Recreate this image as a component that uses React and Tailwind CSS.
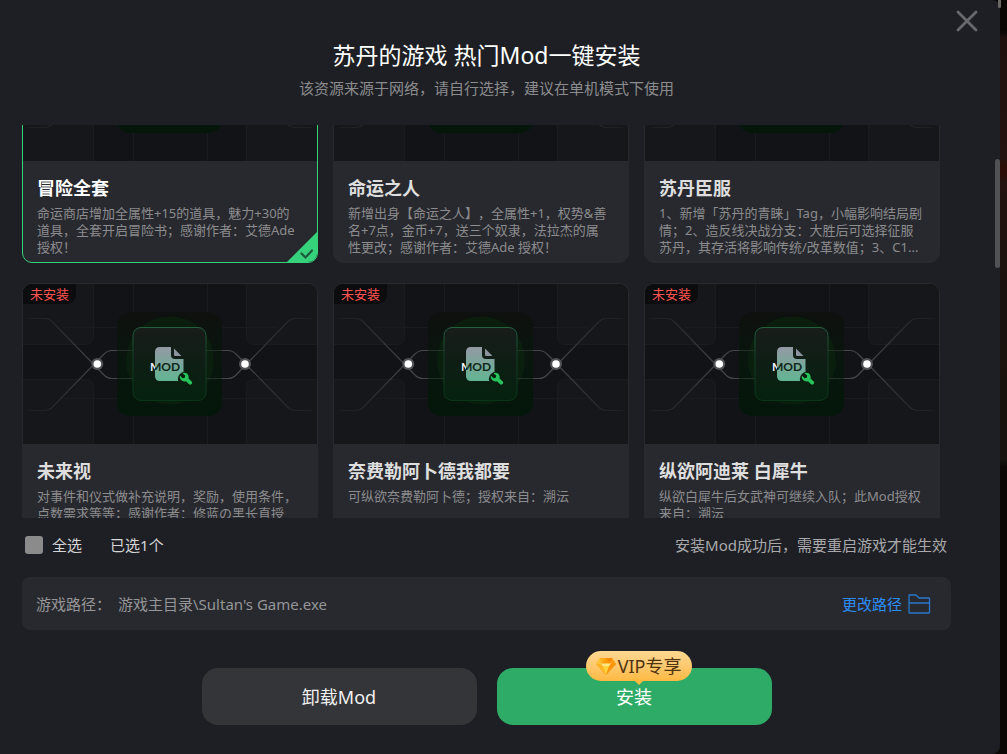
import { useEffect, useRef, useState } from "react";

const MODS = [
  {
    id: 1,
    title: "冒险全套",
    desc: "命运商店增加全属性+15的道具，魅力+30的道具，全套开启冒险书；感谢作者：艾德Ade 授权！",
    installed: true,
  },
  {
    id: 2,
    title: "命运之人",
    desc: "新增出身【命运之人】，全属性+1，权势&善名+7点，金币+7，送三个奴隶，法拉杰的属性更改；感谢作者：艾德Ade 授权！",
    installed: true,
  },
  {
    id: 3,
    title: "苏丹臣服",
    desc: "1、新增「苏丹的青睐」Tag，小幅影响结局剧情；2、造反线决战分支：大胜后可选择征服苏丹，其存活将影响传统/改革数值；3、C1...",
    installed: true,
  },
  {
    id: 4,
    title: "未来视",
    desc: "对事件和仪式做补充说明，奖励，使用条件，点数需求等等；感谢作者：修蓝の黑长直授权！",
    installed: false,
  },
  {
    id: 5,
    title: "奈费勒阿卜德我都要",
    desc: "可纵欲奈费勒阿卜德；授权来自：溯沄",
    installed: false,
  },
  {
    id: 6,
    title: "纵欲阿迪莱 白犀牛",
    desc: "纵欲白犀牛后女武神可继续入队；此Mod授权来自：溯沄",
    installed: false,
  },
];

const ModCover = () => (
  <svg viewBox="0 0 294 160" preserveAspectRatio="xMidYMid slice" className="block w-full h-40 bg-[#121317]" aria-hidden="true">
    <defs>
      <linearGradient id="outer" x1="0" y1="0" x2="0" y2="1">
        <stop offset="0" stopColor="#0e110f" />
        <stop offset="0.5" stopColor="#08160d" />
        <stop offset="1" stopColor="#04160a" />
      </linearGradient>
      <linearGradient id="tile" x1="0" y1="0" x2="0" y2="1">
        <stop offset="0" stopColor="#181d1a" />
        <stop offset="0.5" stopColor="#0e1e14" />
        <stop offset="1" stopColor="#05220e" />
      </linearGradient>
      <linearGradient id="edge" x1="0" y1="0" x2="0" y2="1">
        <stop offset="0" stopColor="#22603f" />
        <stop offset="0.4" stopColor="#173c28" />
        <stop offset="1" stopColor="#0a3617" />
      </linearGradient>
      <linearGradient id="doc" x1="0" y1="0" x2="0" y2="1">
        <stop offset="0" stopColor="#9499a4" />
        <stop offset="1" stopColor="#62b592" />
      </linearGradient>
      <linearGradient id="word" gradientUnits="userSpaceOnUse" x1="127" y1="0" x2="137" y2="0">
        <stop offset="0.5" stopColor="#eef0ff" />
        <stop offset="0.5" stopColor="#11251b" />
      </linearGradient>
      <linearGradient id="fadeL" gradientUnits="userSpaceOnUse" x1="4" y1="0" x2="74" y2="0">
        <stop offset="0" stopColor="#2a2b2e" stopOpacity="0.3" />
        <stop offset="1" stopColor="#454649" />
      </linearGradient>
      <linearGradient id="fadeR" gradientUnits="userSpaceOnUse" x1="290" y1="0" x2="222" y2="0">
        <stop offset="0" stopColor="#2a2b2e" stopOpacity="0.3" />
        <stop offset="1" stopColor="#454649" />
      </linearGradient>
    </defs>

    <g fill="#16171b" stroke="#1b1c20">
      <path d="M-1 -1H70.500V52.500Q70.500 60.500 62.500 60.500H-1Z" />
      <path d="M-1 95.500H62.500Q70.500 95.500 70.500 103.500V161H-1Z" />
      <path d="M295 -1H223.500V52.500Q223.500 60.500 231.500 60.500H295Z" />
      <path d="M295 95.500H231.500Q223.500 95.500 223.500 103.500V161H295Z" />
    </g>
    <g fill="none" stroke="#1a1b1f">
      <path d="M110.500 0V160M184.500 0V160" />
      <path d="M40 43.500H94Q102.500 43.500 102.500 52V106Q102.500 114.500 110 114.500M40 114.500H110" />
      <path d="M254 43.500H200Q191.500 43.500 191.500 52V106Q191.500 114.500 184 114.500M254 114.500H184" />
    </g>

    <rect x="94" y="28" width="105" height="104" rx="13" fill="url(#outer)" />
    <circle cx="147" cy="76.500" r="44" fill="#0b240e" opacity="0.7" />

    <g fill="none" strokeWidth="1.200">
      <path stroke="url(#fadeL)" d="M5 34.500H22Q26 34.500 29 37.500L80 90Q84 94.500 89 94.500H94" />
      <path stroke="url(#fadeL)" d="M5 126.500H22Q26 126.500 29 123.500L80 71Q84 66.500 89 66.500H94" />
      <path stroke="url(#fadeR)" d="M289 34.500H272Q268 34.500 265 37.500L214 90Q210 94.500 205 94.500H199" />
      <path stroke="url(#fadeR)" d="M289 126.500H272Q268 126.500 265 123.500L214 71Q210 66.500 205 66.500H199" />
      <path stroke="#253128" d="M94 66.500H110M94 94.500H110M183 66.500H199M183 94.500H199" />
    </g>

    <rect x="110" y="43.500" width="73" height="73" rx="8" fill="url(#tile)" stroke="url(#edge)" />

    <circle cx="74.300" cy="80" r="6" fill="#515255" />
    <circle cx="74.300" cy="80" r="3.800" fill="#fff" />
    <circle cx="222" cy="80" r="6" fill="#515255" />
    <circle cx="222" cy="80" r="3.800" fill="#fff" />

    <path fill="url(#doc)" d="M137 63H148V71Q148 75 152 75H160.500V97H137Q132 97 132 92V68Q132 63 137 63Z" />
    <path fill="#8b939c" d="M151 64.500L158.500 72H152Q151 72 151 71Z" />
    <text x="127" y="86.500" fill="url(#word)" fontSize="12" className="font-bold font-[family-name:Lato,sans-serif]">
      MOD
    </text>
    <circle cx="162" cy="95" r="7.200" fill="#082010" />
    <path
      fill="#27c45c"
      d="M159.600 89.200C162 88.200 165 89.400 165.600 92.200C165.800 93.200 165.700 93.900 165.500 94.500L168.700 97.600C170.200 99.200 167.700 101.700 166.100 100.200L163 97.200C160.200 98.200 157.200 96.400 156.800 93.600C156.700 92.900 156.800 92.300 157 91.700L159.600 94.200L161.800 93.700L162.200 91.600Z"
    />
  </svg>
);

const ModCard = ({ mod, checked, onToggle }) => (
  <label
    className={`relative flex flex-col h-[263px] rounded-[10px] border overflow-hidden cursor-pointer bg-[#28292e] ${
      checked ? "border-[#36d17b]" : "border-[#28292e]"
    }`}
  >
    <input type="checkbox" className="sr-only" checked={checked} onChange={onToggle} />
    <ModCover />
    {!mod.installed && (
      <span className="absolute left-0 top-0 h-5 px-[7px] rounded-br-[9px] bg-[#0b0c0e] text-[13px] leading-5 text-[#ff5450]">
        未安装
      </span>
    )}
    <div className="pl-[14px] pr-[17px] pt-[15px]">
      <h2 className={`text-lg leading-6 font-bold truncate ${checked ? "text-white" : "text-[#dedede]"}`}>{mod.title}</h2>
      <p className="mt-[5px] text-[13px] leading-[17px] text-[#8c8c8e] [text-spacing-trim:space-all] line-clamp-3">{mod.desc}</p>
    </div>
    {checked && (
      <svg viewBox="0 0 30 30" className="absolute right-0 bottom-0 size-[30px]" aria-hidden="true">
        <path d="M30 0V30H0Z" fill="#36d17b" />
        <path d="M14.500 21.500L18.500 25.500L25 18.500" fill="none" stroke="#1d5a3b" strokeWidth="2.200" strokeLinecap="round" strokeLinejoin="round" />
      </svg>
    )}
  </label>
);

const Diamond = () => (
  <svg viewBox="0 0 20 17" className="w-5 h-[17px] shrink-0" aria-hidden="true">
    <path d="M4 0H16L20 6L10 17L0 6Z" fill="#ffa51a" />
    <path d="M4 0L6 6H0Z" fill="#ffc33c" />
    <path d="M4 0H10L6 6Z" fill="#ffad1c" />
    <path d="M10 0L14 6H6Z" fill="#ff9a0a" />
    <path d="M10 0H16L14 6Z" fill="#ff8a05" />
    <path d="M16 0L20 6H14Z" fill="#ff9a12" />
    <path d="M0 6H6L10 17Z" fill="#ffb524" />
    <path d="M6 6H14L10 17Z" fill="#ffd23e" />
    <path d="M14 6H20L10 17Z" fill="#ff930a" />
    <path d="M5 5.500H15L13 8H7Z" fill="#ffe98a" />
  </svg>
);

const App = () => {
  const [selected, setSelected] = useState([1]);
  const listRef = useRef(null);

  useEffect(() => {
    listRef.current.scrollTop = 125;
  }, []);

  const toggle = (id) => {
    setSelected((prev) => (prev.includes(id) ? prev.filter((x) => x !== id) : [...prev, id]));
  };

  const allSelected = selected.length === MODS.length;

  const toggleAll = () => {
    setSelected(allSelected ? [] : MODS.map((m) => m.id));
  };

  return (
    <div className="relative flex h-screen bg-[linear-gradient(#0a0604_4%,#1d100d_5%,#24120f_21%,#2c0c06_22%,#2c0c06_23%,#24120f_24%,#1a120e_38%,#17120d_61%,#0a0704_62%)] font-['Noto_Sans','Noto_Sans_CJK_SC',sans-serif]">
      <main className="relative flex-1 min-w-0 mr-[7px] flex flex-col pl-[22px] pr-[49px] pb-[29px] rounded-r-lg bg-[#1e1f24]">
        <button type="button" aria-label="关闭" className="absolute right-[22px] top-[10px] size-[22px] text-[#68696c]">
          <svg viewBox="0 0 22 22" fill="none" stroke="currentColor" strokeWidth="2.800" strokeLinecap="round">
            <path d="M2 2L20 20M20 2L2 20" />
          </svg>
        </button>

        <header className="pt-[39px] pb-[25px] text-center">
          <h1 className="text-[23px] leading-8 text-white">苏丹的游戏 热门Mod一键安装</h1>
          <p className="mt-[5px] text-[15px] leading-6 text-[#8c8c8e]">该资源来源于网络，请自行选择，建议在单机模式下使用</p>
        </header>

        <div ref={listRef} className="flex-1 min-h-0 overflow-y-auto [scrollbar-width:none] pr-[11px]">
          <div className="grid grid-cols-3 gap-x-[15px] gap-y-5">
            {MODS.map((mod) => (
              <ModCard key={mod.id} mod={mod} checked={selected.includes(mod.id)} onToggle={() => toggle(mod.id)} />
            ))}
          </div>
        </div>

        <div className="flex items-center h-[53px] mb-[6px] pl-[3px] pr-1 text-[15px] leading-6 text-[#d6d6d8]">
          <label className="flex items-center gap-[9px]">
            <input
              type="checkbox"
              checked={allSelected}
              onChange={toggleAll}
              className="appearance-none size-[18px] rounded-[3px] bg-[#8b8b8b] checked:bg-[#36d17b]"
            />
            全选
          </label>
          <span className="ml-7">已选{selected.length}个</span>
          <span className="ml-auto text-[#a9a9ab]">安装Mod成功后，需要重启游戏才能生效</span>
        </div>

        <div className="flex items-center h-[53px] pl-[14px] pr-5 rounded-lg bg-[#28292e] text-[15px] leading-6 text-[#959597]">
          <span>游戏路径：</span>
          <span className="ml-[7px]">游戏主目录\Sultan's Game.exe</span>
          <button type="button" className="ml-auto flex items-center gap-[6px] text-[#2b8cf5]">
            更改路径
            <svg viewBox="0 0 23 20" className="w-[23px] h-5" fill="none" stroke="#2878cc" strokeWidth="1.300" strokeLinejoin="round">
              <path d="M1 1.500Q1 1 1.500 1H8L11 4H21Q21.500 4 21.500 4.500V18.500Q21.500 19 21 19H1.500Q1 19 1 18.500ZM1 9H21.500" />
            </svg>
          </button>
        </div>

        <footer className="mt-[38px] flex justify-center gap-5 text-lg leading-6">
          <button type="button" className="w-[275px] h-[57px] rounded-2xl bg-[#343539] text-[#f0f0f0]">
            卸载Mod
          </button>
          <button type="button" className="relative w-[275px] h-[57px] rounded-2xl bg-[#2eac67] text-white">
            安装
            <span className="absolute -top-[17px] right-20 flex items-center h-[30px] px-[10px] gap-[2px] rounded-full whitespace-nowrap bg-gradient-to-b from-[#ffd892] to-[#fdb940] text-[#50330f]">
              <Diamond />
              VIP专享
              <span className="absolute left-1/2 -translate-x-1/2 top-full border-x-4 border-t-4 border-x-transparent border-t-[#fdb940]" />
            </span>
          </button>
        </footer>

        <div className="absolute right-0 top-[159px] w-[5px] h-[109px] rounded-full bg-[#515255]" />
      </main>
      <div className="absolute right-[6px] top-0 w-[3px] h-2 rounded-b-full bg-[#6a6765]" />
    </div>
  );
};

export default App;
